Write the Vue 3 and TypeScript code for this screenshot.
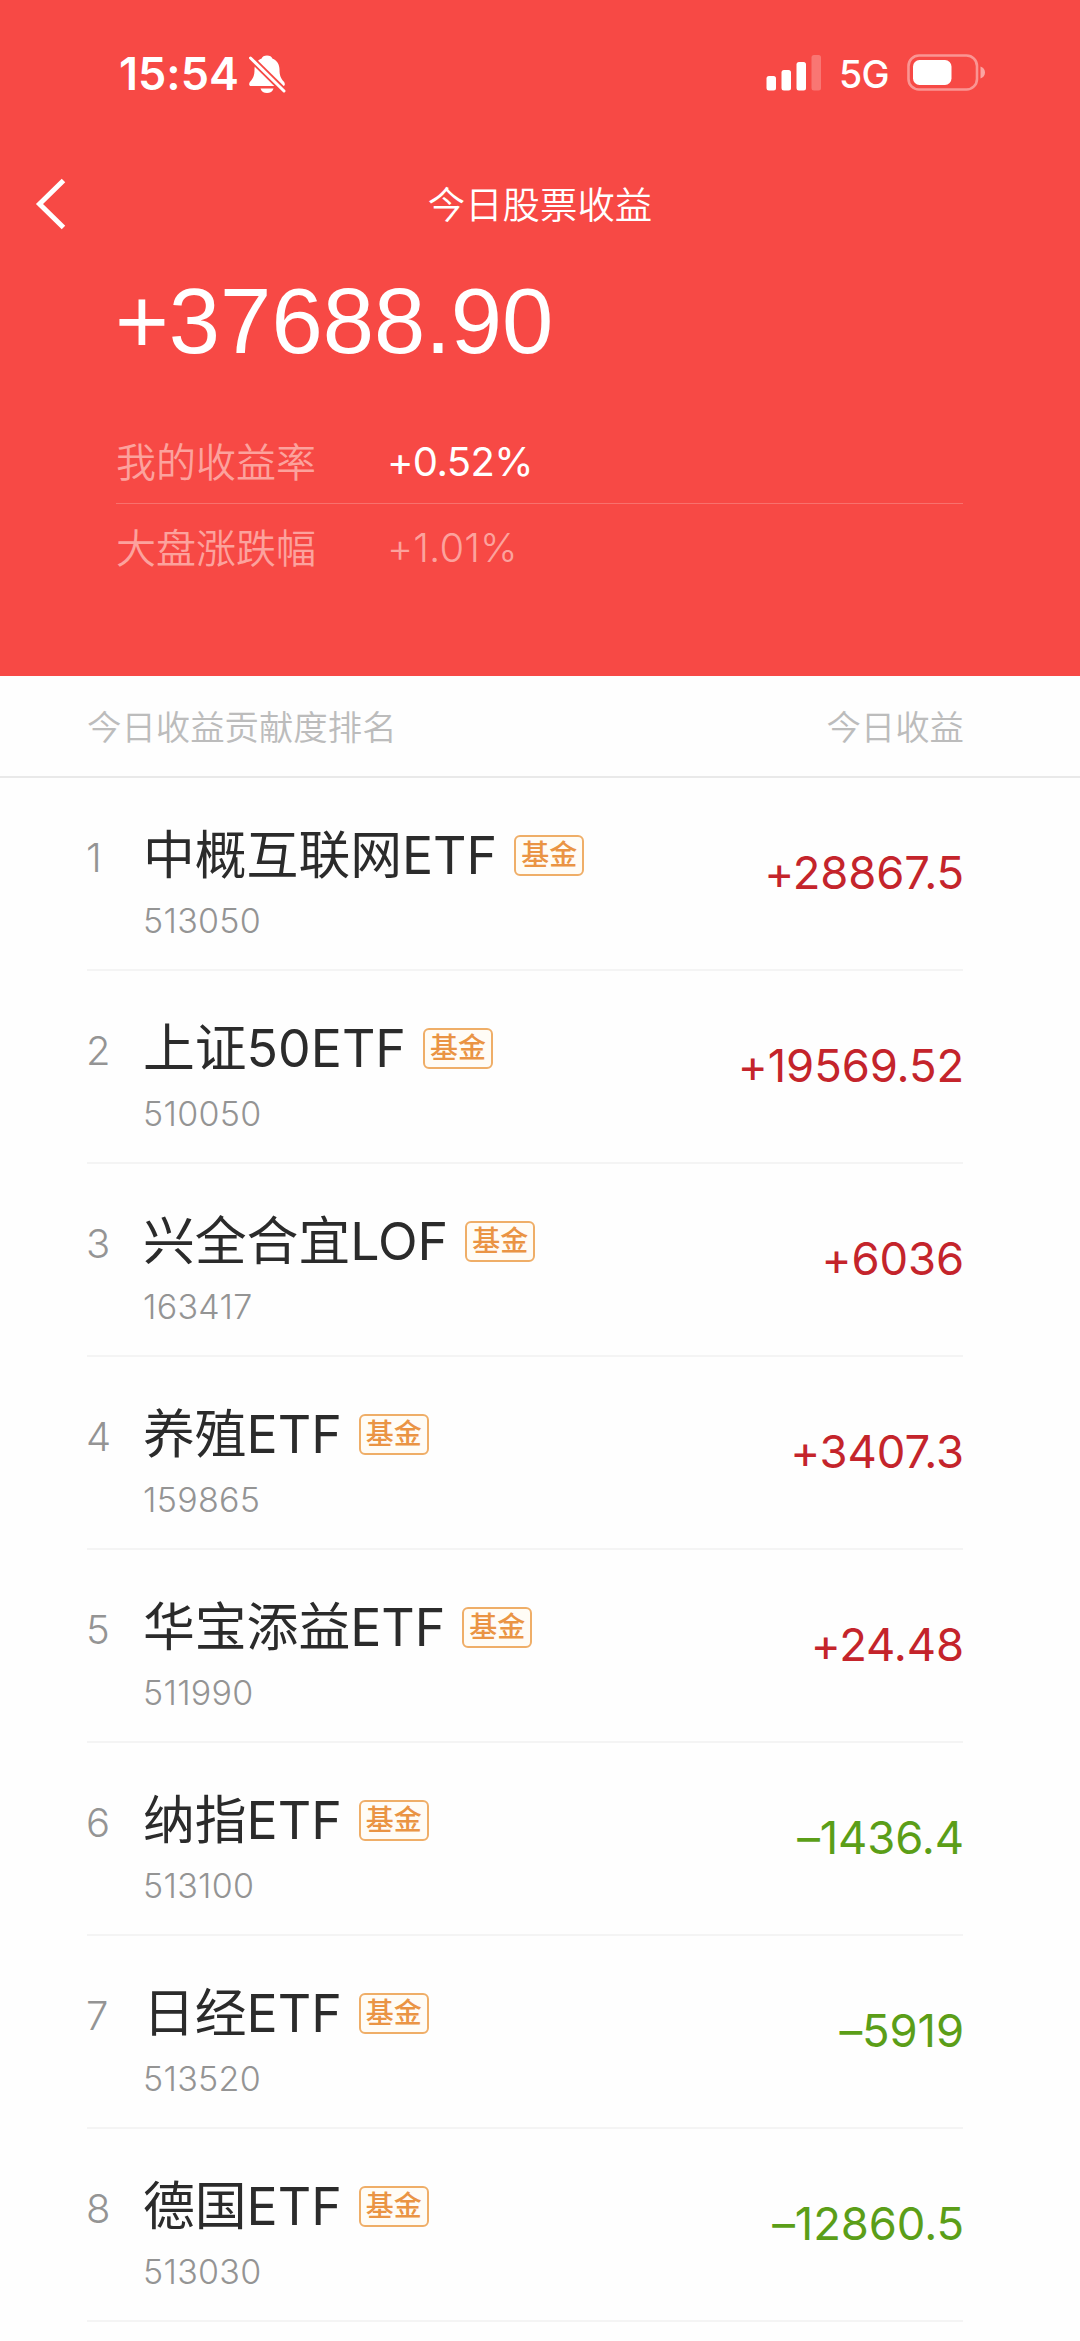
<script setup lang="ts">
interface Holding {
  name: string
  code: string
  gain: string
}

const holdings: Holding[] = [
  { name: '中概互联网ETF', code: '513050', gain: '+28867.5' },
  { name: '上证50ETF', code: '510050', gain: '+19569.52' },
  { name: '兴全合宜LOF', code: '163417', gain: '+6036' },
  { name: '养殖ETF', code: '159865', gain: '+3407.3' },
  { name: '华宝添益ETF', code: '511990', gain: '+24.48' },
  { name: '纳指ETF', code: '513100', gain: '–1436.4' },
  { name: '日经ETF', code: '513520', gain: '–5919' },
  { name: '德国ETF', code: '513030', gain: '–12860.5' },
]
</script>

<template>
  <div class="page">
    <header class="hero">
      <div class="status">
        <span class="time">15:54</span>
        <svg class="bell" width="38" height="40" viewBox="0 0 38 40">
          <path d="M19 1.500c-2.800 0-4.800 1.300-5.300 3C9 6.300 6.500 10.500 6.500 15.500c0 6.500-1.500 9-4.200 12C.6 29.500.8 32 3 32h32c2.200 0 2.400-2.500.7-4.500C33 24.500 31.500 22 31.500 15.500c0-5-2.500-9.200-7.200-11-.5-1.700-2.500-3-5.300-3z" fill="#fff" />
          <path d="M12.500 34.500h13c-.8 3-3.400 4.500-6.500 4.500s-5.700-1.500-6.500-4.500z" fill="#fff" />
          <path d="M1 2.500L37 38" stroke="#f74945" stroke-width="6.600" />
          <path d="M2.500 4L36 37" stroke="#fff" stroke-width="3" stroke-linecap="round" />
        </svg>
        <svg class="signal" width="56" height="36" viewBox="0 0 56 36" fill="#fff">
          <rect x="0.500" y="21" width="9.500" height="14.500" rx="2.500" />
          <rect x="15.500" y="15" width="9.500" height="20.500" rx="2.500" />
          <rect x="30.500" y="7" width="9.500" height="28.500" rx="2.500" />
          <rect x="45.500" y="0" width="9.500" height="35.500" rx="2.500" opacity=".25" />
        </svg>
        <span class="net">5G</span>
        <svg class="battery" width="80" height="38" viewBox="0 0 80 38">
          <rect x="1.500" y="1.500" width="68.500" height="34" rx="10.500" fill="none" stroke="#fff" stroke-opacity=".42" stroke-width="2.600" />
          <rect x="6" y="6" width="38.500" height="25" rx="6.500" fill="#fff" />
          <path d="M73.500 12.500c2.800 1 4.500 3.200 4.500 6s-1.700 5-4.500 6z" fill="#fff" fill-opacity=".5" />
        </svg>
      </div>
      <nav class="bar">
        <svg class="back" width="34" height="54" viewBox="0 0 34 54">
          <path d="M29.500 3.500L5.500 27L29.500 50.500" fill="none" stroke="#fff" stroke-width="5" />
        </svg>
        <h1>今日股票收益</h1>
      </nav>
      <div class="total">+37688.90</div>
      <dl class="rates">
        <div class="rate">
          <dt>我的收益率</dt>
          <dd>+0.52%</dd>
        </div>
        <div class="rate dim">
          <dt>大盘涨跌幅</dt>
          <dd>+1.01%</dd>
        </div>
      </dl>
    </header>
    <div class="columns">
      <span>今日收益贡献度排名</span>
      <span>今日收益</span>
    </div>
    <ul class="list">
      <li v-for="(item, i) in holdings" :key="item.code" class="row">
        <span class="rank">{{ i + 1 }}</span>
        <div class="info">
          <div class="title">
            <span class="name">{{ item.name }}</span>
            <span class="tag">基金</span>
          </div>
          <div class="code">{{ item.code }}</div>
        </div>
        <span class="gain" :class="{ down: item.gain.startsWith('–') }">{{ item.gain }}</span>
      </li>
    </ul>
  </div>
</template>

<style>
body {
  background: #fefefe;
}
</style>

<style scoped>
.page {
  width: 1080px;
  height: 2341px;
  overflow: hidden;
  background: #fefefe;
  font-family: "Inter", "Noto Sans CJK SC", sans-serif;
  font-feature-settings: "calt" 0;
}
.hero {
  box-sizing: border-box;
  height: 676px;
  background: #f74945;
  color: #fff;
}
.status {
  display: flex;
  align-items: center;
  height: 148px;
  padding-left: 119px;
}
.time {
  width: 129px;
  font-size: 45px;
  font-weight: 600;
  line-height: 54px;
  white-space: nowrap;
}
.bell {
  margin-top: -1px;
}
.signal {
  margin: -3px 0 0 480px;
}
.net {
  width: 68px;
  margin-left: 17px;
  font-size: 37.5px;
  font-weight: 500;
  letter-spacing: -0.8px;
  white-space: nowrap;
}
.battery {
  margin-top: -2px;
}
.bar {
  display: grid;
  grid-template-columns: 100px 1fr 100px;
  align-items: center;
  height: 112px;
}
.back {
  margin-left: 34px;
}
h1 {
  margin: 3px 0 0;
  text-align: center;
  font-size: 37.4px;
  line-height: 56px;
  font-weight: 350;
}
.total {
  height: 124px;
  padding-left: 115px;
  font-family: "Liberation Sans", Arial, sans-serif;
  font-size: 92.2px;
  line-height: 124px;
}
.rates {
  margin: 34px 117px 0 116px;
}
.rate {
  display: flex;
  align-items: center;
  height: 85px;
  font-size: 40px;
}
.rate:first-child {
  border-bottom: 1.500px solid rgba(255, 255, 255, 0.22);
}
dt {
  width: 271px;
  margin-top: -2px;
  color: #fca29d;
  font-weight: 350;
}
dd {
  margin: 1px 0 0;
  font-weight: 400;
  letter-spacing: -0.6px;
}
.dim dd {
  color: #fca29d;
  font-weight: 300;
  letter-spacing: 0.1px;
}
.columns {
  box-sizing: border-box;
  display: flex;
  justify-content: space-between;
  height: 102px;
  padding: 2px 116px 0 87px;
  border-bottom: 2px solid #e9e9e9;
  color: #bcbcbc;
  font-size: 34.4px;
  font-weight: 350;
  line-height: 99px;
}
.list {
  margin: 0 117px 0 87px;
  padding: 0;
  list-style: none;
}
.row {
  box-sizing: border-box;
  display: flex;
  height: 193.050px;
  border-bottom: 2px solid #f4f4f4;
}
.rank {
  width: 57px;
  margin-left: -1px;
  padding-top: 56px;
  color: #949494;
  font-size: 40px;
  font-weight: 300;
  line-height: 48px;
}
.info {
  flex: 1;
  padding-top: 45px;
}
.title {
  display: flex;
  align-items: center;
  height: 64px;
}
.name {
  color: #2b2b2b;
  font-size: 51.8px;
  font-weight: 400;
  line-height: 64px;
  white-space: nowrap;
}
.tag {
  box-sizing: border-box;
  width: 70px;
  height: 41px;
  margin-left: 17px;
  border: 2px solid #efae68;
  border-radius: 6px;
  background: #fffcf6;
  color: #ea9444;
  font-size: 28px;
  font-weight: 500;
  line-height: 37px;
  text-align: center;
}
.code {
  margin-top: 14px;
  color: #949494;
  font-size: 34px;
  font-weight: 300;
  letter-spacing: 0.3px;
  line-height: 40px;
}
.gain {
  margin-right: -1px;
  padding-top: 67px;
  color: #c4242b;
  font-size: 45.4px;
  font-weight: 400;
  letter-spacing: -0.1px;
  line-height: 56px;
}
.gain.down {
  color: #5b9e18;
}
</style>
